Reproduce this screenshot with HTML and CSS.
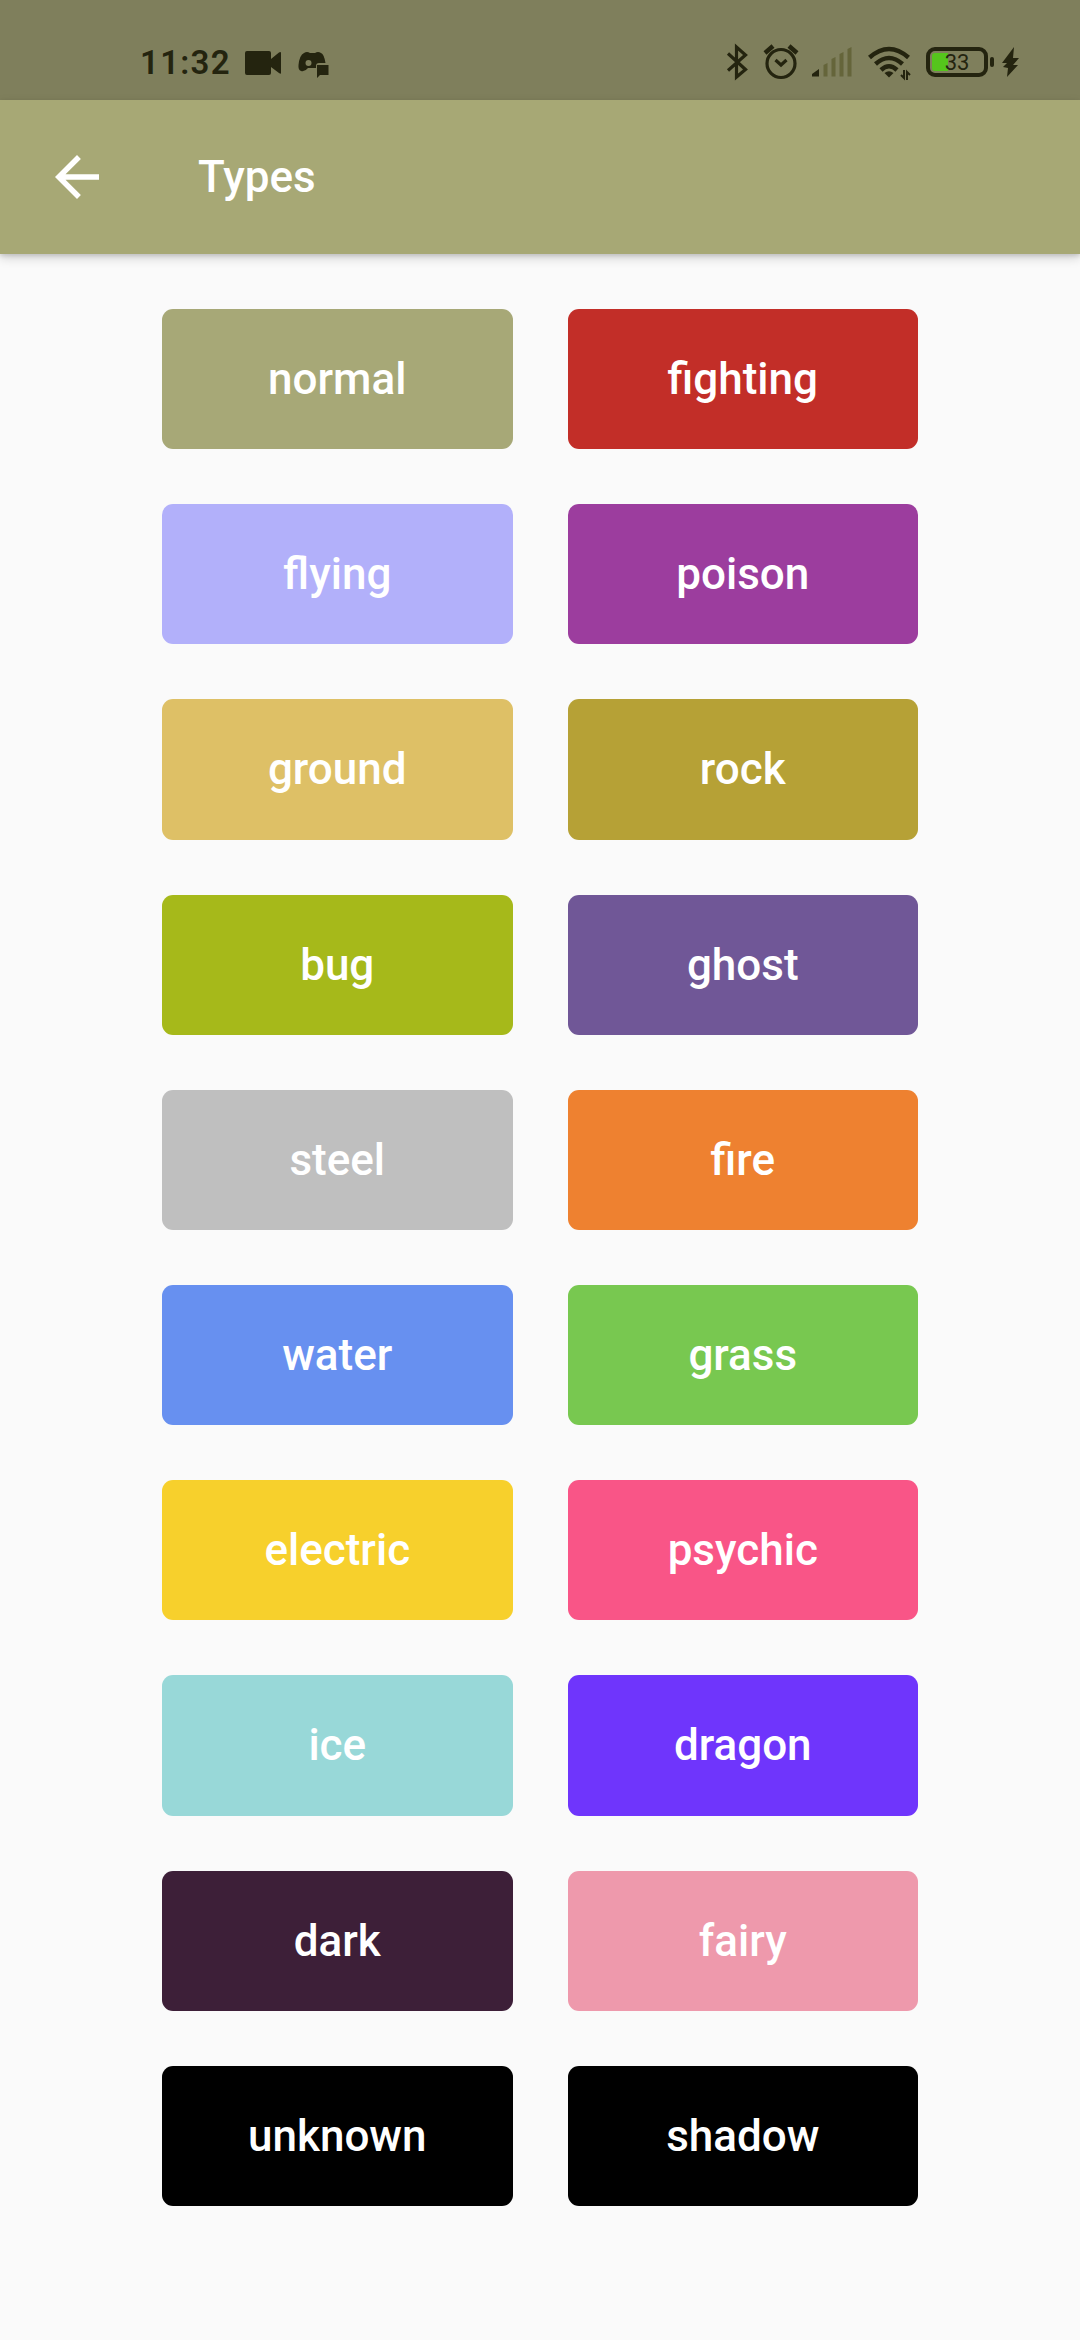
FILE: index.html
```html
<!DOCTYPE html>
<html lang="en">
<head>
<meta charset="utf-8">
<title>Types</title>
<link rel="stylesheet" href="styles.css">
</head>
<body>
<div class="status">
  <span class="time">11:32</span>
  <svg class="camera" width="36" height="24" viewBox="0 0 36 24"><path d="M2 0H24Q26 0 26 2V8L34 1.5Q36 .5 36 2V22Q36 23.500 34 22L26 16V22Q26 24 24 24H2Q0 24 0 22V2Q0 0 2 0Z"/></svg>
  <svg class="game" width="32" height="27" viewBox="0 0 32 27"><path fill-rule="evenodd" d="M6 2Q9 0 12 2H17Q20 0 23 2Q26 3 27.500 12H21Q18 12 18 15V17H10Q7 21 3 20Q0 19 .5 14Q1.500 4 6 2ZM7.500 12a3 3 0 1 0 6 0a3 3 0 1 0-6 0Z"/><path d="M19.500 14H30.500V24H22L19 27V14Z"/></svg>
  <span class="spacer"></span>
  <svg class="bluetooth" width="22" height="36" viewBox="0 0 22 36"><path class="line" d="M1 9.500L18.500 25.500L9.500 33V3L18.500 11L1 26.500"/></svg>
  <svg class="alarm" width="36" height="36" viewBox="0 0 36 36"><circle class="line" cx="18" cy="19.500" r="14"/><path class="line" d="M12.500 16L18 21L23.500 16"/><path class="line thick" d="M2 9L10 2M26 2L34 9"/></svg>
  <svg class="signal" width="40" height="30" viewBox="0 0 40 30"><path d="M0 29.500V27L7 22V29.500Z"/><path class="dim" d="M11.500 18L15.500 16V29.500H11.500ZM19.500 12L23.500 10V29.500H19.500ZM27.500 7L31.500 5V29.500H27.500ZM35.500 2L39.500 0V29.500H35.500Z"/></svg>
  <svg class="wifi" width="43" height="34" viewBox="0 0 43 34"><path class="line arc" d="M1.500 10.500Q21 -6.500 40.500 10.500M7.500 17Q21 5 34.500 17M13 23Q21 15.500 29 23"/><path d="M16.500 26Q21 22.500 25.500 26L21 30.500Z"/><path class="line fine" d="M33 28L36 31V23M39 33V25L42 28"/></svg>
  <span class="battery"><span class="level">33</span></span>
  <span class="cap"></span>
  <svg class="bolt" width="18" height="30" viewBox="0 0 18 30"><path d="M12 0L0 16H5L1 20L6 21L5 30L16 18H11L17 11H11Z"/></svg>
</div>
<header class="appbar">
  <svg width="44" height="44" viewBox="4 4 16 16"><path d="M20 11H7.830l5.590-5.590L12 4l-8 8 8 8 1.410-1.410L7.830 13H20v-2z"/></svg>
  <h1>Types</h1>
</header>
<main class="grid">
  <div class="type normal">normal</div>
  <div class="type fighting">fighting</div>
  <div class="type flying">flying</div>
  <div class="type poison">poison</div>
  <div class="type ground">ground</div>
  <div class="type rock">rock</div>
  <div class="type bug">bug</div>
  <div class="type ghost">ghost</div>
  <div class="type steel">steel</div>
  <div class="type fire">fire</div>
  <div class="type water">water</div>
  <div class="type grass">grass</div>
  <div class="type electric">electric</div>
  <div class="type psychic">psychic</div>
  <div class="type ice">ice</div>
  <div class="type dragon">dragon</div>
  <div class="type dark">dark</div>
  <div class="type fairy">fairy</div>
  <div class="type unknown">unknown</div>
  <div class="type shadow">shadow</div>
</main>
</body>
</html>
```
FILE: styles.css
```css
* { box-sizing: border-box; }
body {
  margin: 0;
  width: 1080px;
  height: 2340px;
  overflow: hidden;
  background: #fafafa;
  font-family: Roboto, sans-serif;
}
.status {
  display: flex;
  align-items: flex-start;
  height: 100px;
  padding: 0 60px 0 140px;
  background: #7f7f5c;
  color: #24240f;
}
.status svg { flex: none; fill: #24240f; overflow: visible; }
.status .line { fill: none; stroke: #24240f; stroke-width: 3.2; }
.status .thick { stroke-width: 4.5; }
.status .arc { stroke-width: 4.5; }
.status .fine { stroke-width: 2; }
.status .dim { fill: #65653a; }
.time {
  width: 105px;
  margin-top: 43px;
  font-size: 33px;
  line-height: 40px;
  font-weight: 600;
  letter-spacing: 1.3px;
}
.camera { margin-top: 51px; }
.game { margin: 51px 0 0 17px; }
.spacer { flex: 1; }
.bluetooth { margin: 44px 14px 0 0; }
.alarm { margin: 44px 13px 0 0; }
.signal { margin: 47px 16px 0 0; }
.wifi { margin: 47px 15px 0 0; }
.battery {
  width: 62px;
  height: 30px;
  margin-top: 47px;
  padding: 2px;
  border: 4px solid #24240f;
  border-radius: 9px;
}
.level {
  display: block;
  height: 18px;
  border-radius: 3px;
  background: linear-gradient(90deg, #55c51c 16px, transparent 16px);
  font-size: 22px;
  line-height: 19px;
  text-align: center;
}
.cap {
  width: 4px;
  height: 10px;
  margin: 57px 8px 0 2px;
  border-radius: 2px;
  background: #24240f;
}
.bolt { margin-top: 47px; }
.appbar {
  display: flex;
  align-items: center;
  height: 154px;
  padding-left: 55px;
  background: #a7a875;
  color: #fff;
  box-shadow: 0 4px 10px rgba(0, 0, 0, .16), 0 2px 4px rgba(0, 0, 0, .12);
}
.appbar svg { fill: #fff; }
.appbar h1 {
  margin: 0 0 0 99px;
  font-size: 44px;
  font-weight: 500;
  line-height: 52px;
}
.grid {
  display: grid;
  grid-template-columns: 350.5px 350.5px;
  grid-auto-rows: 140.2px;
  gap: 55px;
  padding: 55px 162px;
}
.type {
  display: flex;
  align-items: center;
  justify-content: center;
  border-radius: 11px;
  color: #fff;
  font-size: 44px;
  font-weight: 500;
  line-height: 52px;
}
.normal { background: #a7a877; }
.fighting { background: #c22e28; }
.flying { background: #b2b0fa; }
.poison { background: #9c3d9e; }
.ground { background: #dec066; }
.rock { background: #b6a136; }
.bug { background: #a6b91a; }
.ghost { background: #705797; }
.steel { background: #bfbfbf; }
.fire { background: #ee8130; }
.water { background: #6790f0; }
.grass { background: #78c850; }
.electric { background: #f7d02c; }
.psychic { background: #f95587; }
.ice { background: #98d8d8; }
.dragon { background: #6f35fc; }
.dark { background: #3d1f38; }
.fairy { background: #ee99ac; }
.unknown, .shadow { background: #000; }
```
